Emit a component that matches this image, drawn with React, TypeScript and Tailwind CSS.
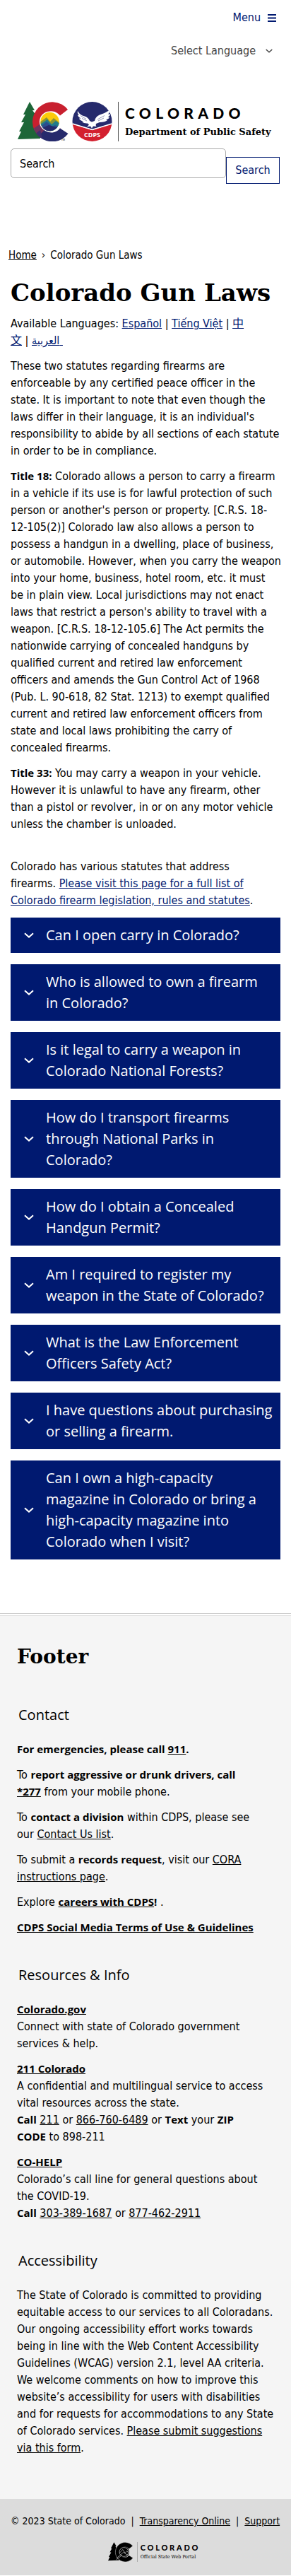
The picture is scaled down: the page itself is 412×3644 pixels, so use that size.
import type { ReactNode } from "react";

const questions = [
  "Can I open carry in Colorado?",
  "Who is allowed to own a firearm in\u00a0Colorado?",
  "Is it legal to carry a weapon in Colorado National Forests?",
  "How do I transport firearms through National Parks in Colorado?",
  "How do I obtain a Concealed Handgun Permit?",
  "Am I required to register my weapon in the State of Colorado?",
  "What is the Law Enforcement Officers Safety Act?",
  "I have questions about purchasing or selling a firearm.",
  "Can I own a high-capacity magazine in Colorado or bring a high-capacity magazine into Colorado when I visit?",
];

function Chevron({ className }: { className: string }) {
  return (
    <svg viewBox="0 0 14 8" className={className} fill="none" stroke="currentColor" aria-hidden="true">
      <path d="M1 1.2 7 6.6 13 1.2" strokeWidth="2" />
    </svg>
  );
}

function Strong({ children }: { children: ReactNode }) {
  return <b className="font-['Open_Sans',sans-serif] text-[15px] leading-none font-bold">{children}</b>;
}

function Link({ children, navy }: { children: ReactNode; navy?: boolean }) {
  return (
    <a href="#" className={`underline ${navy ? "text-[#001970]" : "text-black"}`}>
      {children}
    </a>
  );
}

const treePath = "M17 0 24 12 21 12 28 22 25 22 32 34 32 52 0 53 5 42 2 42 9 29 5 29 11 18 8 18Z";
const letterC = "M71 11A28 28 0 1 0 71.5 45L60 37.5A15 15 0 1 1 60 19.5Z";
const eaglePath =
  "M85 13Q88 19 95 20.5 100 22 102 27L105 28.5 109 27Q110 21 116 18.5 124 16 129 12.5 131 15 128 17.5L131 17.5Q131 20 127.5 21.5L130 22Q129 24.5 125 25L127 26Q124 29 116 29L111 31Q110 34 112 35L107 34.5 105 37.5 103 34.5 98 35.5 101 32.5 99 30.5Q94 31 91 28L93 27.5Q88 26.5 87 23.5L89.5 23.5Q85 21 85 18.5L87 18.5Q84 16 85 13Z";

function LogoMark() {
  return (
    <svg viewBox="0 0 134 56" className="h-14 w-[134px] shrink-0" role="img" aria-label="State of Colorado and CDPS emblems">
      <defs>
        <clipPath id="letter">
          <path d={letterC} />
        </clipPath>
        <clipPath id="sun">
          <circle cx="45.5" cy="28" r="13.2" />
        </clipPath>
        <clipPath id="seal">
          <circle cx="105.5" cy="28" r="28" />
        </clipPath>
      </defs>
      <path d={treePath} fill="#1d6638" />
      <g clipPath="url(#letter)">
        <path d="M0 0H76V34L54 40 34 33 19 44 0 46Z" fill="#c8202f" />
        <path d="M76 60H24V49L38 34 56 38 76 31Z" fill="#262a6c" />
        <path d="M16 42 34 30 40 38 26 52Z" fill="#70325f" />
        <path d="M24 46 32 40 36 56H26Z" fill="#3d3070" />
      </g>
      <circle cx="45.5" cy="28" r="14.6" fill="#fff" />
      <g clipPath="url(#sun)">
        <path d="M30 12H62V44H30Z" fill="#fccb0a" />
        <path d="M30 30 41 22 46 28 51 23 62 32V44H30Z" fill="#8a9434" />
        <path d="M30 33 42 25 48 32 54 27 62 33V44H30Z" fill="#217b8c" />
        <path d="M30 37 41 28 49 35 53 33 62 37V44H30Z" fill="#2b4d8e" />
        <path d="M30 39 44 33 62 38V44H30Z" fill="#262a6c" />
      </g>
      <text x="61" y="55" fontSize="4" fontFamily="Roboto, sans-serif" fill="#333">
        TM
      </text>
      <g clipPath="url(#seal)">
        <path d="M77 0H134V31L105.5 39 77 31Z" fill="#262a6c" />
        <path d="M77 31 105.5 40 134 31V56H77Z" fill="#d3202f" />
        <path d="M76 30.5 105.5 39.5 135 30.5" fill="none" stroke="#fff" strokeWidth="1.6" />
      </g>
      <path d={eaglePath} fill="#fff" />
      <path d="M89 19.5 97 24.5M91 23.5 98 27M123 19.5 113 25M122 23 114 27" stroke="#262a6c" strokeWidth=".5" fill="none" />
      <text x="105.5" y="50" textAnchor="middle" fontSize="9" fontWeight="700" fontFamily="Open Sans, sans-serif" fill="#fff">
        CDPS
      </text>
    </svg>
  );
}

function PortalMark() {
  return (
    <svg viewBox="0 0 73 56" className="h-7 w-9 shrink-0" aria-hidden="true">
      <path d={treePath} fill="#000" />
      <path d={letterC} fill="#000" stroke="#ddd" strokeWidth="1" />
      <circle cx="45.5" cy="28" r="15.5" fill="#000" />
      <circle cx="45.5" cy="28" r="13" fill="none" stroke="#ccc" strokeWidth="1.5" />
      <path d="M33 31 42 21 49 31 54 25 59 31M24 46 44 29 56 37M24 50 40 37" fill="none" stroke="#ccc" strokeWidth="1.5" />
    </svg>
  );
}

function FooterSection({ title, children }: { title: string; children: ReactNode }) {
  return (
    <section className="pb-10">
      <h3 className="mb-[22px] px-[2px] font-['Open_Sans',sans-serif] text-xl leading-[30px]">{title}</h3>
      <div className="flex flex-col gap-3">{children}</div>
    </section>
  );
}

export default function App() {
  return (
    <div className="bg-white font-['DejaVu_Sans_Condensed','Noto_Sans_CJK_SC',sans-serif] text-base leading-6 text-black">
      <header className="px-[15px]">
        <div className="flex justify-end pt-[13px] pr-[6px]">
          <button type="button" className="flex items-center gap-[10px] text-[#001970]">
            Menu
            <svg viewBox="0 0 12 12" className="size-3" fill="currentColor" aria-hidden="true">
              <path d="M0 1h12v2H0zM0 5.5h12v2H0zM0 10h12v2H0z" />
            </svg>
          </button>
        </div>
        <div className="flex justify-end pt-[23px] pr-[11px]">
          <div className="relative flex items-center text-[#444]">
            <select aria-label="Select Language" className="appearance-none bg-transparent pr-[23px]">
              <option>Select Language</option>
            </select>
            <Chevron className="pointer-events-none absolute right-0 h-[6px] w-[10px]" />
          </div>
        </div>
        <a href="#" className="mt-[60px] flex items-center pl-[10px] text-black">
          <LogoMark />
          <span className="ml-[8px] h-14 w-px shrink-0 bg-[#555]" />
          <span className="ml-[9px] flex flex-col gap-[5px] whitespace-nowrap">
            <span className="font-[Lato,sans-serif] text-[21px] leading-6 font-black tracking-[0.3em]">COLORADO</span>
            <span className="font-['DejaVu_Serif',serif] text-[13px] leading-5 font-bold">Department of Public Safety</span>
          </span>
        </a>
        <form className="mt-[10px] flex items-start pr-px" onSubmit={(e) => e.preventDefault()}>
          <input
            type="text"
            aria-label="Search"
            placeholder="Search"
            className="h-[42px] min-w-0 flex-1 rounded-[5px] border border-[#aaa] px-3 placeholder:text-black"
          />
          <button type="submit" className="mt-3 h-[38px] w-[76px] border border-[#001970] text-[#001970]">
            Search
          </button>
        </form>
      </header>

      <main className="px-[15px] pt-[89px]">
        <nav aria-label="Breadcrumb" className="-ml-[3px] flex gap-[7px] text-[15px]">
          <Link>Home</Link>
          <span>›</span>
          <span>Colorado Gun Laws</span>
        </nav>
        <h1 className="mt-[16px] font-['DejaVu_Serif',serif] text-[34px] leading-[50px] font-bold whitespace-nowrap">
          Colorado Gun Laws
        </h1>
        <div className="-mr-2 mt-[7px] flex flex-col gap-3">
          <p>
            Available Languages: <Link navy>Español</Link> | <Link navy>Tiếng Việt</Link> |{" "}
            <Link navy>
              中<br />文
            </Link>{" "}
            | <Link navy>{"العربية\u00a0"}</Link>
          </p>
          <p>
            These two statutes regarding firearms are
            <br />
            enforceable by any certified peace officer in the
            <br />
            state. It is important to note that even though the
            <br />
            laws differ in their language, it is an individual's
            <br />
            responsibility to abide by all sections of each statute
            <br />
            in order to be in compliance.
          </p>
          <p>
            <Strong>Title 18:</Strong> Colorado allows a person to carry a firearm
            <br />
            in a vehicle if its use is for lawful protection of such
            <br />
            person or another's person or property. [C.R.S. 18-
            <br />
            12-105(2)] Colorado law also allows a person to
            <br />
            possess a handgun in a dwelling, place of business,
            <br />
            or automobile. However, when you carry the weapon
            <br />
            into your home, business, hotel room, etc. it must
            <br />
            be in plain view. Local jurisdictions may not enact
            <br />
            laws that restrict a person's ability to travel with a
            <br />
            weapon. [C.R.S. 18-12-105.6] The Act permits the
            <br />
            nationwide carrying of concealed handguns by
            <br />
            qualified current and retired law enforcement
            <br />
            officers and amends the Gun Control Act of 1968
            <br />
            (Pub. L. 90-618, 82 Stat. 1213) to exempt qualified
            <br />
            current and retired law enforcement officers from
            <br />
            state and local laws prohibiting the carry of
            <br />
            concealed firearms.
          </p>
          <p>
            <Strong>Title 33:</Strong> You may carry a weapon in your vehicle.
            <br />
            However it is unlawful to have any firearm, other
            <br />
            than a pistol or revolver, in or on any motor vehicle
            <br />
            unless the chamber is unloaded.
          </p>
          <p className="mt-6">
            Colorado has various statutes that address
            <br />
            firearms.{" "}
            <Link navy>
              Please visit this page for a full list of
              <br />
              Colorado firearm legislation, rules and statutes
            </Link>
            .
          </p>
        </div>
        <div className="mt-3 flex flex-col gap-4">
          {questions.map((q) => (
            <button
              key={q}
              type="button"
              aria-expanded="false"
              className="flex w-full items-center gap-[17px] bg-[#001970] py-[10px] pr-1 pl-[19px] text-left font-['Open_Sans',sans-serif] text-xl leading-[30px] text-white"
            >
              <Chevron className="h-2 w-[14px] shrink-0" />
              <span>{q}</span>
            </button>
          ))}
        </div>
      </main>

      <footer className="mt-[76px] border-t border-[#ccc]">
        <div className="mt-[2px] border-t border-[#ddd] bg-[#f5f5f5] px-6 pt-[38px] pb-5">
          <h2 className="mb-[47px] font-['DejaVu_Serif',serif] text-[28px] leading-10 font-bold">Footer</h2>
          <FooterSection title="Contact">
            <p>
              <Strong>
                For emergencies, please call <Link>911</Link>.
              </Strong>
            </p>
            <p>
              To{" "}
              <Strong>
                report aggressive or drunk drivers, call
                <br />
                <Link>*277</Link>
              </Strong>{" "}
              from your mobile phone.
            </p>
            <p>
              To <Strong>contact a division</Strong> within CDPS, please see
              <br />
              our <Link>Contact Us list</Link>.
            </p>
            <p>
              To submit a <Strong>records request</Strong>, visit our <Link>CORA instructions page</Link>.
            </p>
            <p>
              Explore{" "}
              <Strong>
                <Link>careers with CDPS</Link>!
              </Strong>{" "}
              .
            </p>
            <p>
              <Strong>
                <Link>CDPS Social Media Terms of Use &amp; Guidelines</Link>
              </Strong>
            </p>
          </FooterSection>
          <FooterSection title="Resources &amp; Info">
            <p>
              <Strong>
                <Link>Colorado.gov</Link>
              </Strong>
              <br />
              Connect with state of Colorado government services &amp; help.
            </p>
            <p>
              <Strong>
                <Link>211 Colorado</Link>
              </Strong>
              <br />
              A confidential and multilingual service to access vital resources across the state.
              <br />
              <Strong>Call</Strong> <Link>211</Link> or <Link>866-760-6489</Link> or <Strong>Text</Strong> your{" "}
              <Strong>
                ZIP
                <br />
                CODE
              </Strong>{" "}
              to 898-211
            </p>
            <p>
              <Strong>
                <Link>CO-HELP</Link>
              </Strong>
              <br />
              Colorado’s call line for general questions about the COVID-19.
              <br />
              <Strong>Call</Strong> <Link>303-389-1687</Link> or <Link>877-462-2911</Link>
            </p>
          </FooterSection>
          <FooterSection title="Accessibility">
            <p>
              The State of Colorado is committed to providing equitable access to our services to all Coloradans. Our
              ongoing accessibility effort works towards being in line with the Web Content Accessibility Guidelines
              (WCAG) version 2.1, level AA criteria. We welcome comments on how to improve this website’s accessibility
              for users with disabilities and for requests for accommodations to any State of Colorado services.{" "}
              <Link>Please submit suggestions via this form</Link>.
            </p>
          </FooterSection>
        </div>
        <div className="bg-[#dcdcdc] px-[15px] pt-[19px] pb-[19px]">
          <div className="flex gap-2 text-sm leading-6 whitespace-nowrap">
            <span>© 2023 State of Colorado</span>
            <span>|</span>
            <Link>Transparency Online</Link>
            <span>|</span>
            <Link>Support</Link>
          </div>
          <a href="#" className="mt-[18px] flex items-center justify-center pl-6 text-black">
            <PortalMark />
            <span className="ml-[5px] h-7 w-px bg-[#aaa]" />
            <span className="ml-1 flex flex-col whitespace-nowrap">
              <span className="font-[Lato,sans-serif] text-[11px] leading-[14px] font-black tracking-[0.25em]">COLORADO</span>
              <span className="font-['DejaVu_Serif_Condensed','DejaVu_Serif',serif] text-[7px] leading-3">
                Official State Web Portal
              </span>
            </span>
          </a>
        </div>
      </footer>
    </div>
  );
}
